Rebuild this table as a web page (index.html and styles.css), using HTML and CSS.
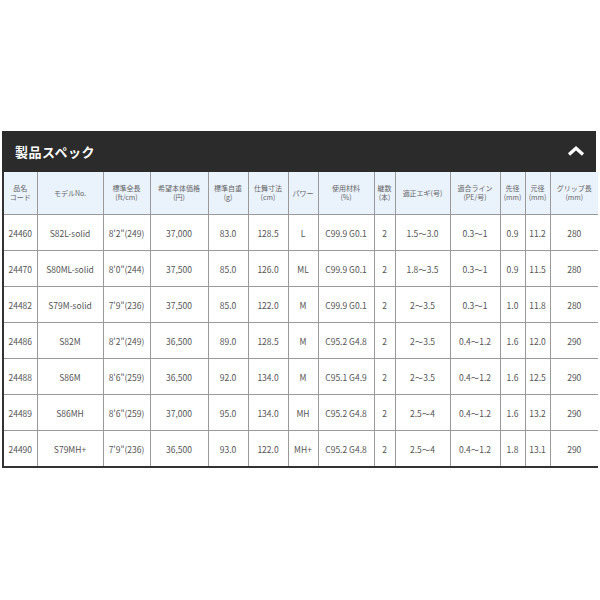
FILE: index.html
```html
<!DOCTYPE html>
<html lang="ja">
<head>
<meta charset="utf-8">
<link rel="stylesheet" href="styles.css">
</head>
<body>
<div class="spec">
  <div class="spec-head">
    <h2 class="spec-title">製品スペック</h2>
    <svg class="chev" width="18" height="10" viewBox="0 0 18 10"><path d="M2 8.5 L9 2.2 L16 8.5" fill="none" stroke="#fff" stroke-width="3.2" stroke-linejoin="miter"/></svg>
  </div>
  <table class="spec-table">
    <colgroup>
      <col style="width:34px"><col style="width:66px"><col style="width:47px"><col style="width:58px"><col style="width:40px"><col style="width:40px"><col style="width:30px"><col style="width:56px"><col style="width:21px"><col style="width:55px"><col style="width:50px"><col style="width:25px"><col style="width:25px"><col style="width:48px">
    </colgroup>
    <thead>
      <tr>
        <th>品名<br>コード</th><th>モデルNo.</th><th>標準全長<br>(ft/cm)</th><th>希望本体価格<br>(円)</th><th>標準自重<br>(g)</th><th>仕舞寸法<br>(cm)</th><th>パワー</th><th>使用材料<br>(%)</th><th>継数<br>(本)</th><th>適正エギ(号)</th><th>適合ライン<br>(PE/号)</th><th>先径<br>(mm)</th><th>元径<br>(mm)</th><th>グリップ長<br>(mm)</th>
      </tr>
    </thead>
    <tbody>
      <tr><td>24460</td><td>S82L-solid</td><td>8'2"(249)</td><td>37,000</td><td>83.0</td><td>128.5</td><td>L</td><td>C99.9 G0.1</td><td>2</td><td>1.5〜3.0</td><td>0.3〜1</td><td>0.9</td><td>11.2</td><td>280</td></tr>
      <tr><td>24470</td><td>S80ML-solid</td><td>8'0"(244)</td><td>37,500</td><td>85.0</td><td>126.0</td><td>ML</td><td>C99.9 G0.1</td><td>2</td><td>1.8〜3.5</td><td>0.3〜1</td><td>0.9</td><td>11.5</td><td>280</td></tr>
      <tr><td>24482</td><td>S79M-solid</td><td>7'9"(236)</td><td>37,500</td><td>85.0</td><td>122.0</td><td>M</td><td>C99.9 G0.1</td><td>2</td><td>2〜3.5</td><td>0.3〜1</td><td>1.0</td><td>11.8</td><td>280</td></tr>
      <tr><td>24486</td><td>S82M</td><td>8'2"(249)</td><td>36,500</td><td>89.0</td><td>128.5</td><td>M</td><td>C95.2 G4.8</td><td>2</td><td>2〜3.5</td><td>0.4〜1.2</td><td>1.6</td><td>12.0</td><td>290</td></tr>
      <tr><td>24488</td><td>S86M</td><td>8'6"(259)</td><td>36,500</td><td>92.0</td><td>134.0</td><td>M</td><td>C95.1 G4.9</td><td>2</td><td>2〜3.5</td><td>0.4〜1.2</td><td>1.6</td><td>12.5</td><td>290</td></tr>
      <tr><td>24489</td><td>S86MH</td><td>8'6"(259)</td><td>37,000</td><td>95.0</td><td>134.0</td><td>MH</td><td>C95.2 G4.8</td><td>2</td><td>2.5〜4</td><td>0.4〜1.2</td><td>1.6</td><td>13.2</td><td>290</td></tr>
      <tr><td>24490</td><td>S79MH+</td><td>7'9"(236)</td><td>36,500</td><td>93.0</td><td>122.0</td><td>MH+</td><td>C95.2 G4.8</td><td>2</td><td>2.5〜4</td><td>0.4〜1.2</td><td>1.8</td><td>13.1</td><td>290</td></tr>
    </tbody>
  </table>
</div>
</body>
</html>
```
FILE: styles.css
```css
html, body {
  margin: 0;
  padding: 0;
  background: #fff;
}
body {
  font-family: "Noto Sans CJK JP", "Noto Sans", sans-serif;
  color: #555;
}
.spec {
  padding: 131px 0 0 2px;
  width: 595px;
}
.spec-head {
  height: 41px;
  background: #2b2b2b;
  display: flex;
  align-items: center;
  justify-content: space-between;
  padding: 0 11px 0 13px;
  width: 594px;
  box-sizing: border-box;
}
.spec-title {
  margin: 0;
  color: #fff;
  font-size: 13px;
  font-weight: 700;
  letter-spacing: 0.5px;
}
.chev {
  display: block;
  margin-top: -1px;
}
.spec-table {
  width: 595px;
  table-layout: fixed;
  border-collapse: collapse;
  border-left: 2px solid #333;
  border-bottom: 2px solid #333;
}
.spec-table th,
.spec-table td {
  border: 1px solid #9a9a9a;
  text-align: center;
  padding: 0;
  overflow: hidden;
  white-space: nowrap;
}
.spec-table th {
  background: #eaf2fc;
  height: 42px;
  font-size: 7px;
  font-weight: 400;
  line-height: 9px;
  color: #666;
  border-top: none;
}
.spec-table td {
  height: 35px;
  font-size: 8.5px;
  color: #555;
}
.spec-table tr > :last-child {
  border-right: none;
}
```
